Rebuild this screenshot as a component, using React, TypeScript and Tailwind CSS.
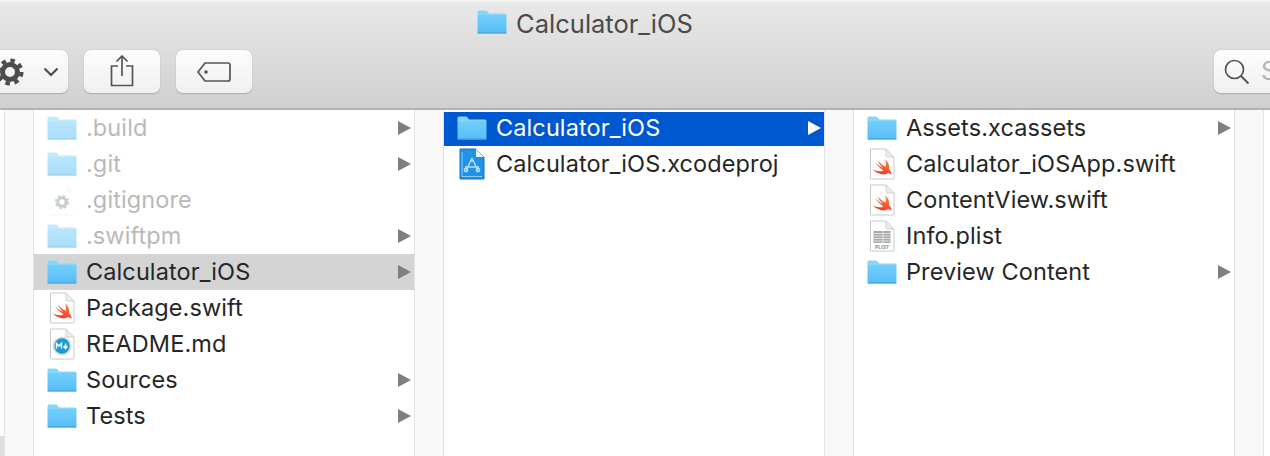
import { useId } from "react";

type Kind = "folder" | "swift" | "gear" | "md" | "plist" | "xcode";
type Row = { name: string; kind: Kind; arrow?: boolean; dim?: boolean; selected?: "gray" | "blue" };

const col1: Row[] = [
  { name: ".build", kind: "folder", arrow: true, dim: true },
  { name: ".git", kind: "folder", arrow: true, dim: true },
  { name: ".gitignore", kind: "gear", dim: true },
  { name: ".swiftpm", kind: "folder", arrow: true, dim: true },
  { name: "Calculator_iOS", kind: "folder", arrow: true, selected: "gray" },
  { name: "Package.swift", kind: "swift" },
  { name: "README.md", kind: "md" },
  { name: "Sources", kind: "folder", arrow: true },
  { name: "Tests", kind: "folder", arrow: true },
];

const col2: Row[] = [
  { name: "Calculator_iOS", kind: "folder", arrow: true, selected: "blue" },
  { name: "Calculator_iOS.xcodeproj", kind: "xcode" },
];

const col3: Row[] = [
  { name: "Assets.xcassets", kind: "folder", arrow: true },
  { name: "Calculator_iOSApp.swift", kind: "swift" },
  { name: "ContentView.swift", kind: "swift" },
  { name: "Info.plist", kind: "plist" },
  { name: "Preview Content", kind: "folder", arrow: true },
];

function Folder({ className }: { className?: string }) {
  const id = useId();
  return (
    <svg viewBox="0 0 30 24" className={className} width="30" height="24">
      <defs>
        <linearGradient id={id} x1="0" y1="0" x2="0" y2="1">
          <stop offset="0" stopColor="#72cffb" />
          <stop offset="1" stopColor="#57bdf6" />
        </linearGradient>
      </defs>
      <path d="M.5 6 V2 Q.5 .5 2 .5 H9 Q10 .5 11 2 L12 3.500 H28 Q29.500 3.500 29.500 5 V6 Z" fill="#86d6fb" />
      <rect x=".5" y="5" width="29" height="18.500" rx="1.500" fill={`url(#${id})`} />
      <rect x=".5" y="22.300" width="29" height="1.200" rx=".6" fill="#48a8e0" />
    </svg>
  );
}

function Page({ children }: { children?: React.ReactNode }) {
  return (
    <svg viewBox="0 0 26 32" width="26" height="32">
      <path d="M1.500 1 H17 L25 9 V30 Q25 31 24 31 H2.500 Q1.500 31 1.500 30 Z" fill="#fff" stroke="#c9c9c9" />
      <path d="M17 1 V8 Q17 9 18 9 H25 Z" fill="#ececec" stroke="#d0d0d0" />
      {children}
    </svg>
  );
}

function SwiftMark() {
  const id = useId();
  return (
    <>
      <defs>
        <linearGradient id={id} x1="0.7" y1="0" x2="0.4" y2="1">
          <stop offset="0" stopColor="#fb8a3c" />
          <stop offset="1" stopColor="#f8342a" />
        </linearGradient>
      </defs>
      <path
        d="M16 11 C19.500 14.500 21 18 19.800 20.700 C21.800 22.800 23 25.300 22.500 27 C21.200 25.300 19.500 24.800 17.800 25.700 C14 27.500 8 26 3.500 21 C7 23.300 11.500 24 14.300 22.400 C11 20.200 7.800 16.800 6 14.300 C9 16.800 12 19 13.800 19.800 C11.500 17.500 9.500 14.800 8.500 12.500 C11.500 15.500 14.500 17.800 16.600 18.800 C17.300 16.500 17 13.500 16 11 Z"
        fill={`url(#${id})`}
      />
    </>
  );
}

function FileIcon({ kind }: { kind: Kind }) {
  if (kind === "folder") return <Folder />;
  if (kind === "swift")
    return (
      <Page>
        <SwiftMark />
      </Page>
    );
  if (kind === "gear")
    return (
      <svg viewBox="0 0 26 32" width="26" height="32">
        <path d="M2 1 H17 L25 9 V31 H2 Z" fill="#fff" />
        <path d="M2 31 H25" stroke="#ececec" />
        <path d="M17 1 L25 9 H17 Z" fill="#f3f3f3" />
        <circle cx="13" cy="18" r="4.200" fill="none" stroke="#8d9ca3" strokeWidth="3" />
        <circle cx="13" cy="18" r="6.200" fill="none" stroke="#8d9ca3" strokeWidth="1.800" strokeDasharray="2.400 2.470" />
      </svg>
    );
  if (kind === "md")
    return (
      <Page>
        <circle cx="13" cy="18" r="9.500" fill="#dcdfe1" />
        <circle cx="13" cy="18" r="7.700" fill="#1d9bd0" />
        <path d="M7.500 20.500 V15.500 L10 18 L12.500 15.500 V20.500" fill="none" stroke="#fff" strokeWidth="1.500" />
        <path d="M16.500 15.500 V20 M14.500 18.300 L16.500 20.500 L18.500 18.300" fill="none" stroke="#fff" strokeWidth="1.500" />
      </Page>
    );
  if (kind === "plist")
    return (
      <Page>
        <rect x="4.500" y="11" width="17" height="12" fill="#a9a9a9" />
        <path d="M4.500 13.500 H21.500 M4.500 16 H21.500 M4.500 18.500 H21.500 M4.500 21 H21.500 M14 11 V23" stroke="#efefef" strokeWidth=".8" />
        <text x="13" y="29" textAnchor="middle" fontSize="5" fontFamily="Liberation Sans" fontWeight="700" fill="#8c8c8c">
          PLIST
        </text>
      </Page>
    );
  return (
    <svg viewBox="0 0 26 32" width="26" height="32">
      <path d="M1 1 H17 L25 9 V31 H1 Z" fill="#1f93ea" stroke="#1273c6" />
      <path d="M17 1 L25 9 H17 Z" fill="#e8f2fb" />
      <path d="M3 4 V28.500 H23" fill="none" stroke="#a9d8f8" strokeWidth=".8" />
      <g fill="none" stroke="#b4defb" strokeWidth="1.400">
        <path d="M13 10 L7 23 M13 10 L19 23 M6 19 H20 M11 13 H15" />
        <circle cx="7" cy="22" r="1.700" />
        <circle cx="19" cy="22" r="1.700" />
      </g>
    </svg>
  );
}

function Arrow({ white }: { white?: boolean }) {
  return (
    <svg viewBox="0 0 13 14" width="13" height="14" className="ml-auto mr-[3px] shrink-0">
      <path d="M0 0 L13 7 L0 14 Z" fill={white ? "#ffffff" : "#7f7f7f"} />
    </svg>
  );
}

function FileRow({ row, first }: { row: Row; first: boolean }) {
  const bg = row.selected === "blue" ? "bg-[#0058d0]" : row.selected === "gray" ? "bg-[#d4d4d4]" : "";
  const text = row.selected === "blue" ? "text-white" : row.dim ? "text-[#b9b9b9]" : "text-[#262626]";
  return (
    <div className={`flex items-center ${first ? "mt-[2px] h-[34px] pb-[2px]" : "h-9"} ${bg}`}>
      <div className={`ml-[13px] flex w-[30px] shrink-0 justify-center ${row.dim ? "opacity-50" : ""}`}>
        <FileIcon kind={row.kind} />
      </div>
      <span className={`ml-[9px] text-[23.5px] tracking-[0.1px] ${text}`}>{row.name}</span>
      {row.arrow && <Arrow white={row.selected === "blue"} />}
    </div>
  );
}

function Column({ rows }: { rows: Row[] }) {
  return (
    <div className="w-[380px] shrink-0 bg-white">
      {rows.map((r, i) => (
        <FileRow key={r.name} row={r} first={i === 0} />
      ))}
    </div>
  );
}

function Gutter({ className }: { className: string }) {
  return <div className={`shrink-0 border-x border-[#e3e3e3] bg-[#f8f8f8] ${className}`} />;
}

function ToolButton({ children, className }: { children: React.ReactNode; className: string }) {
  return (
    <div
      className={`flex h-[44px] shrink-0 items-center rounded-[7px] border-b border-b-[#b4b4b4] bg-gradient-to-b from-[#fdfdfd] to-[#f0f0f0] shadow-[0_0_1px_rgba(0,0,0,0.35)] ${className}`}
    >
      {children}
    </div>
  );
}

export default function App() {
  return (
    <div className="flex h-[456px] w-[1270px] flex-col overflow-hidden bg-white font-['Inter','Liberation_Sans',sans-serif]">
      <div className="h-[110px] shrink-0 border-b-2 border-[#b3b3b3] bg-gradient-to-b from-[#e9e9e9] to-[#d0d0d0] shadow-[inset_0_2px_0_#f3f3f3]">
        <div className="flex h-[50px] items-start justify-center pr-[100px] pt-[10px]">
          <Folder />
          <span className="ml-[9px] text-[25.5px] leading-[28px] text-[#4a4a4a]">Calculator_iOS</span>
        </div>
        <div className="flex items-start">
          <ToolButton className="-ml-[10px] w-[78px]">
            <svg viewBox="0 0 28 28" width="28" height="28" className="ml-[6px]">
              <circle cx="14" cy="14" r="7.500" fill="none" stroke="#4d4d4d" strokeWidth="5" />
              <circle cx="14" cy="14" r="11.500" fill="none" stroke="#4d4d4d" strokeWidth="4" strokeDasharray="4.500 4.530" />
            </svg>
            <svg viewBox="0 0 16 10" width="16" height="10" className="ml-[19px]">
              <path d="M1.500 1.500 L8 8 L14.500 1.500" fill="none" stroke="#4d4d4d" strokeWidth="2.200" />
            </svg>
          </ToolButton>
          <ToolButton className="ml-4 w-[76px] justify-center">
            <svg viewBox="0 0 24 32" width="24" height="32" className="-mt-[2px]">
              <path d="M8 11 H1.500 V30.500 H22.500 V11 H16 M12 21 V1.500 M6.500 6.500 L12 1 L17.500 6.500" fill="none" stroke="#555555" strokeWidth="1.700" />
            </svg>
          </ToolButton>
          <ToolButton className="ml-4 w-[76px] justify-center">
            <svg viewBox="0 0 34 20" width="34" height="20">
              <path d="M8 1 H31 Q33 1 33 3 V17 Q33 19 31 19 H8 L1 10 Z" fill="none" stroke="#555555" strokeWidth="1.700" strokeLinejoin="round" />
              <circle cx="9" cy="10" r="1.800" fill="#555555" />
            </svg>
          </ToolButton>
          <ToolButton className="ml-auto -mr-[40px] w-[96px]">
            <svg viewBox="0 0 26 26" width="26" height="26" className="ml-[10px]">
              <circle cx="10.500" cy="10.500" r="9" fill="none" stroke="#555555" strokeWidth="1.700" />
              <path d="M17 17 L24.500 24.500" stroke="#555555" strokeWidth="2" />
            </svg>
            <span className="ml-[11px] text-[25px] text-[#b4b4b4]">S</span>
          </ToolButton>
        </div>
      </div>
      <div className="flex min-h-0 flex-1">
        <div className="flex w-[4px] shrink-0 flex-col bg-white">
          <div className="mt-auto h-5 bg-[#dedede]" />
        </div>
        <Gutter className="w-[30px]" />
        <Column rows={col1} />
        <Gutter className="w-[30px]" />
        <Column rows={col2} />
        <Gutter className="w-[30px]" />
        <Column rows={col3} />
        <Gutter className="w-[30px]" />
      </div>
    </div>
  );
}
